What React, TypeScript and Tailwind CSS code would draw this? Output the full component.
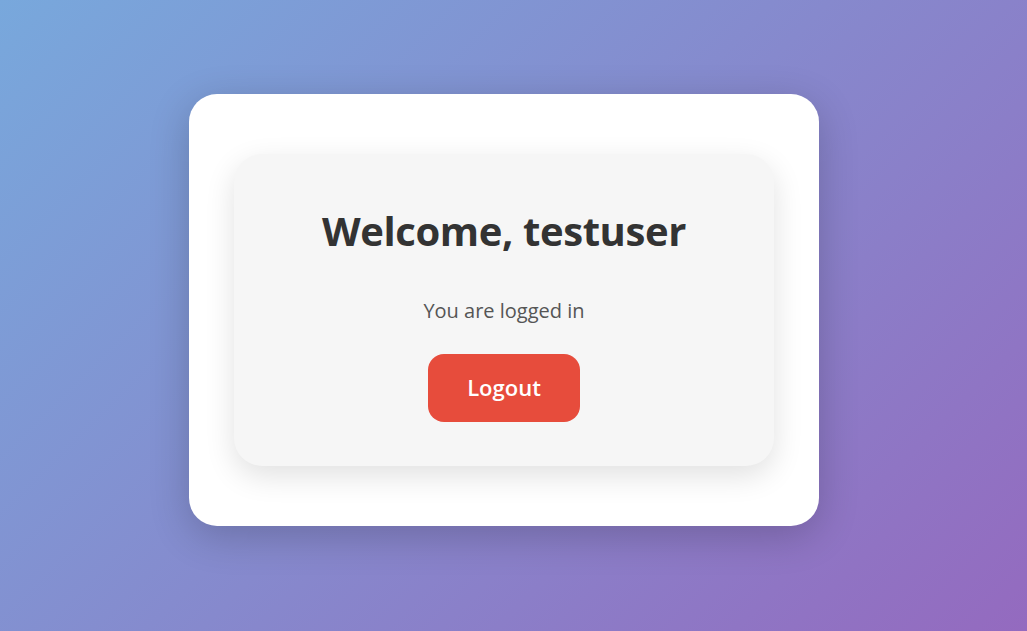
export default function App() {
  return (
    <div
      className="w-[1027px] h-[631px] flex items-center justify-center pr-[19px] pb-[12px] bg-[linear-gradient(135deg,#78a8dc_0%,#8689cd_50%,#946abf_100%)]"
      style={{ fontFamily: '"Open Sans", "Noto Sans", sans-serif' }}
    >
      <div className="w-[630px] h-[432px] bg-white rounded-[28px] shadow-[0_10px_40px_rgba(0,0,0,0.2)] px-[45px] py-[60px]">
        <div className="h-[312px] bg-[#f6f6f6] rounded-[28px] shadow-[0_10px_30px_rgba(0,0,0,0.12)] flex flex-col items-center pt-[53px]">
          <h1 className="text-[40px] leading-[48px] font-bold text-[#333333] tracking-[-0.4px]">Welcome, testuser</h1>
          <p className="mt-[42px] text-[20px] leading-[28px] text-[#555555]">You are logged in</p>
          <button className="mt-[29px] w-[152px] h-[68px] rounded-[16px] bg-[#e74c3c] text-white text-[22px] font-semibold">
            Logout
          </button>
        </div>
      </div>
    </div>
  );
}
